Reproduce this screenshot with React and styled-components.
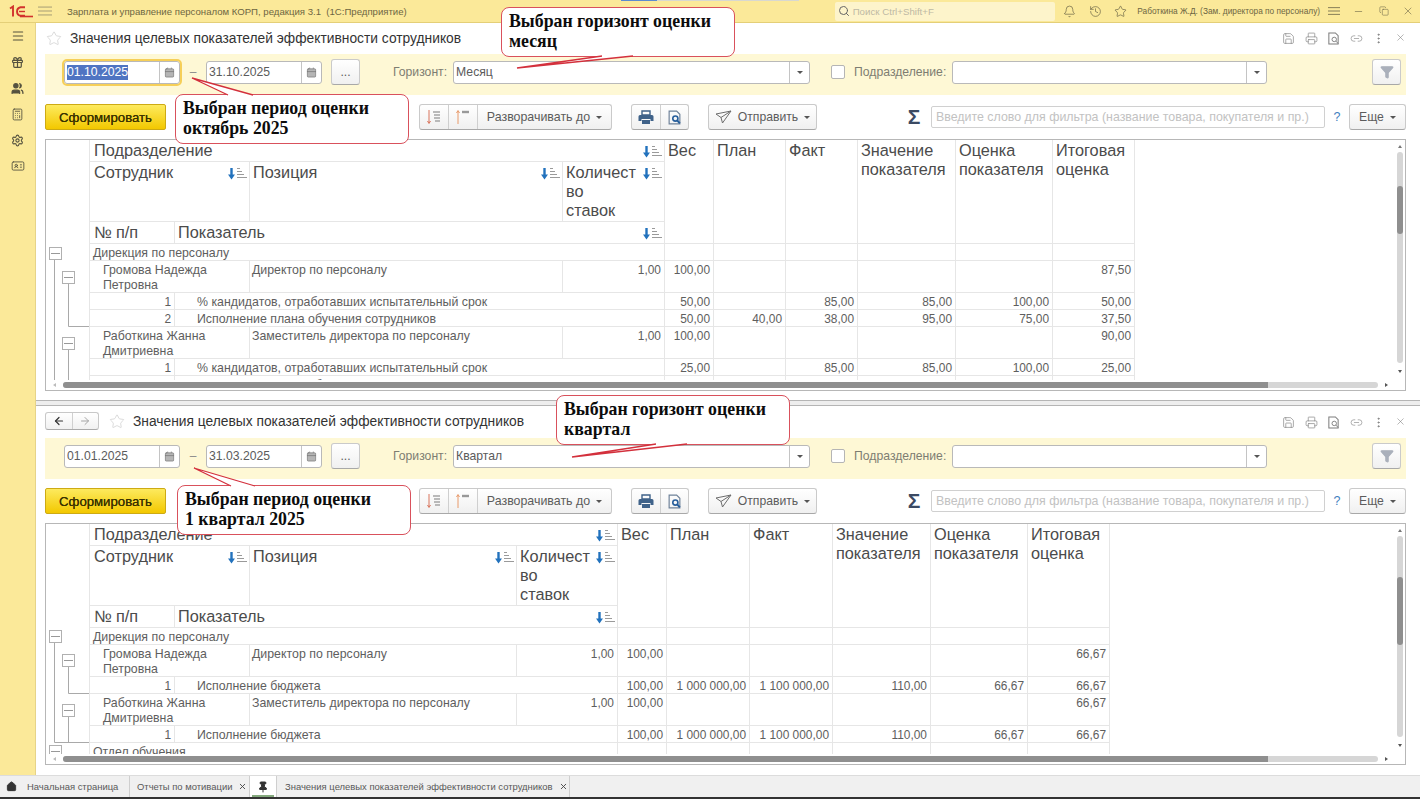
import React from "react";
import styled, { createGlobalStyle, css } from "styled-components";
import {
  Menu, Gift, Users, Calculator, Settings, IdCard, Bell, History, Star, Search, Minus, Copy, X,
  Save, Printer, Link2, MoreVertical, Calendar, Home, Pin, ArrowLeft, ArrowRight, Filter,
} from "lucide-react";

const Global = createGlobalStyle`
  html, body { margin: 0; padding: 0; background: #fff; }
  * { box-sizing: border-box; }
  body { font-family: "Liberation Sans", Arial, sans-serif; color: #555; }
`;

const Page = styled.div`
  position: relative; width: 1420px; height: 799px; overflow: hidden;
  display: flex; flex-direction: column; background: #fff;
`;
const TopBar = styled.header`
  position: relative; height: 23px; flex: none; display: flex; align-items: center;
  background: #fbe999; border-bottom: 1px solid #e4cf78; color: #6d6642; font-size: 9.6px;
`;
const LoadStrip = styled.div`
  position: absolute; top: 0; left: 621px; width: 178px; height: 1px;
  background: linear-gradient(to right, #5b8bd0 20%, #d8d8d0 20%);
`;
const LogoBox = styled.div` width: 36px; padding-left: 9px; display: flex; align-items: center; `;
const HamburgerTop = styled.div` width: 29px; display: flex; color: #9a9270; margin-left: 2px; `;
const AppTitle = styled.div` width: 769px; white-space: pre; `;
const SearchBox = styled.div`
  width: 221px; height: 19px; background: #fdf4cb; border-radius: 2px; display: flex; align-items: center;
  gap: 3px; padding-left: 3px; color: #bdb9a4; font-size: 9.7px;
`;
const TopIcon = styled.div`
  width: ${(p) => p.$w || 25}px; display: flex; justify-content: center; color: #5f5a40; flex: none;
`;
const UserName = styled.div` width: 188px; padding-left: 4px; white-space: nowrap; font-size: 8.3px; `;

const Body = styled.div` flex: 1; display: flex; min-height: 0; `;
const Side = styled.nav`
  width: 36px; flex: none; background: #fbe999; border-right: 1px solid #e6d388;
  display: flex; flex-direction: column; align-items: center; color: #55523f;
`;
const SideItem = styled.div` height: 26px; display: flex; align-items: center; justify-content: center; `;
const Main = styled.main` flex: 1; display: flex; flex-direction: column; min-width: 0; `;
const PanelBox = styled.section`
  flex: none; height: ${(p) => p.$h}px; padding-left: 9px; display: flex; flex-direction: column; width: 1384px;
`;
const Splitter = styled.div`
  height: 6px; flex: none; background: #eeeeee; border-top: 1px solid #b5b5b5; border-bottom: 1px solid #b5b5b5;
`;
const TitleRow = styled.div`
  height: ${(p) => p.$h}px; flex: none; display: flex; align-items: center;
`;
const NavGroup = styled.div`
  width: 54px; height: 18px; display: flex; border: 1px solid #c8c8c8; border-bottom-color: #aaa; border-radius: 3px;
  background: linear-gradient(#fff, #f1f1f1); margin-right: 9px; margin-top: -2px;
`;
const NavBtn = styled.div`
  flex: 1; display: flex; align-items: center; justify-content: center; color: ${(p) => (p.$off ? "#a5a5a5" : "#333")};
  & + & { border-left: 1px solid #d0d0d0; }
`;
const FavStar = styled.div` width: 16px; height: 18px; display: flex; color: #c8c8c8; margin-left: 1px; `;
const Title = styled.h1`
  margin: -1px 0 0 8px; font-weight: 400; font-size: 13.8px; color: #333; flex: 1; white-space: nowrap;
`;
const TitleIcons = styled.div` display: flex; color: #7d7d7d; margin-right: 8px; `;
const TitleIcon = styled.div` width: 22.4px; display: flex; justify-content: center; `;

const FilterBar = styled.div`
  height: 41px; width: 1361px; flex: none; background: #fef8d5; display: flex; align-items: center;
  padding: 0 0 5px 19px;
`;
const Field = styled.div`
  position: relative; height: 23px; width: ${(p) => p.$w}px; margin-left: ${(p) => p.$ml || 0}px; flex: none;
  background: #fff; border: 1px solid #b9b9b9; border-radius: 3px; display: flex; align-items: center;
  font-size: 12.2px; color: #5b5b5b;
  ${(p) => p.$focus && css`outline: 2px solid #f6cf58; outline-offset: 0;`}
`;
const FieldValue = styled.div` flex: 1; padding-left: 2px; white-space: nowrap; `;
const Selected = styled.span` background: #4f74c2; color: #fff; padding: 0 0 1px; `;
const FieldBtn = styled.div`
  width: 20px; height: 100%; flex: none; border-left: 1px solid #c4c4c4; display: flex; align-items: center; justify-content: center;
  color: #6f6f6f;
`;
const Caret = styled.span`
  display: inline-block; width: 0; height: 0; border-left: 3px solid transparent; border-right: 3px solid transparent;
  border-top: 3px solid #555; margin-left: ${(p) => p.$ml || 0}px;
`;
const Dash = styled.div` width: 26px; text-align: center; flex: none; color: #8a8a8a; font-size: 12px; `;
const Label = styled.div` margin-left: ${(p) => p.$ml}px; color: #7d7d72; font-size: 12.2px; white-space: nowrap; flex: none; `;
const Check = styled.div`
  width: 14px; height: 14px; margin-left: ${(p) => p.$ml}px; border: 1px solid #b5b5b5; border-radius: 2px; background: #fff; flex: none;
`;
const Btn = styled.div`
  height: 26px; width: ${(p) => p.$w}px; margin-left: ${(p) => p.$ml || 0}px; flex: none;
  border: 1px solid #cacaca; border-bottom-color: #a8a8a8; border-radius: 3px;
  background: linear-gradient(#ffffff, #f0f0f0); display: flex; align-items: center; justify-content: center; gap: 6px;
  font-size: 12.2px; color: #5c5c5c; white-space: nowrap;
`;
const Toolbar = styled.div` height: 26px; margin-top: 9px; flex: none; display: flex; align-items: center; width: 1361px; `;
const PrimaryBtn = styled.div`
  width: 121px; height: 26px; flex: none; border: 1px solid #cdaa14; border-radius: 2px;
  background: linear-gradient(#fdea5e, #f3c800); display: flex; align-items: center; justify-content: center;
  font-size: 13.2px; color: #3a3200; text-shadow: 0 0 0.4px #3a3200;
`;
const BtnGroup = styled.div`
  height: 26px; display: flex; flex: none; margin-left: ${(p) => p.$ml}px;
  border: 1px solid #cacaca; border-bottom-color: #a8a8a8; border-radius: 3px; background: linear-gradient(#ffffff, #f0f0f0);
`;
const GroupItem = styled.div`
  width: ${(p) => p.$w}px; display: flex; align-items: center; justify-content: center; gap: 6px;
  font-size: 12.4px; color: #5c5c5c; white-space: nowrap;
  & + & { border-left: 1px solid #cfcfcf; }
`;
const SigmaMark = styled.div`
  width: 16px; margin-left: 89px; flex: none; text-align: center; font-size: 21px; font-weight: 700; color: #3b4a63; line-height: 26px;
`;
const SearchInput = styled.div`
  width: 394px; height: 22px; margin-left: 9px; flex: none; border: 1px solid #d0d0d0; border-radius: 2px;
  padding-left: 4px; display: flex; align-items: center; font-size: 12.4px; color: #c2c2c2; white-space: nowrap; overflow: hidden;
`;
const Help = styled.div` width: 24px; flex: none; text-align: center; color: #3f7fc0; font-size: 12.5px; `;

const Frame = styled.div`
  margin-top: 9px; width: 1361px; height: ${(p) => p.$h}px; flex: none; border: 1px solid #b7b7b7;
  display: grid; grid-template-columns: 1fr 11px; grid-template-rows: 1fr 10px; overflow: hidden;
`;
const Scrollable = styled.div` display: flex; overflow: hidden; min-height: 0; `;
const Gutter = styled.svg` width: 43px; flex: none; display: block; `;
const TableGrid = styled.div`
  display: grid; align-self: flex-start; flex: none; border-left: 1px solid #e6e6e6;
  grid-template-columns: ${(p) => p.$cols}; grid-template-rows: ${(p) => p.$rows};
`;
const HeadCell = styled.div`
  grid-column: ${(p) => p.$col}; grid-row: ${(p) => p.$row};
  border-right: 1px solid #e6e6e6; border-bottom: 1px solid #e6e6e6;
  display: flex; justify-content: space-between; align-items: flex-start; padding: 1px 1px 0 ${(p) => p.$pl || 3}px;
  font-size: 16.3px; line-height: 19px; color: #4b4b4b; white-space: nowrap; min-width: 0;
`;
const HeadText = styled.span` flex: none; `;
const Cell = styled.div`
  grid-column: span ${(p) => p.$span || 1};
  border-right: 1px solid #e6e6e6; border-bottom: 1px solid #e6e6e6;
  padding: 1.5px ${(p) => (p.$right ? 3 : 0)}px 0 ${(p) => p.$pl || 0}px; text-align: ${(p) => (p.$right ? "right" : "left")};
  font-size: ${(p) => (p.$right ? 11.9 : 12.35)}px; line-height: 15px; color: #5e5e5e; white-space: pre-line; overflow: hidden;
`;
const VScroll = styled.div` display: flex; flex-direction: column; align-items: center; min-height: 0; `;
const VTrack = styled.div`
  flex: 1; width: 6px; background: #d6d6d6; border-radius: 3px; position: relative; margin-left: 1px;
`;
const VThumb = styled.div`
  margin-top: ${(p) => p.$top}px; height: ${(p) => p.$h}px; background: #8f8f8f; border-radius: 3px;
`;
const ArrowBox = styled.div`
  height: ${(p) => p.$h}px; width: ${(p) => p.$w || "100%"}; flex: none; display: flex; align-items: center; justify-content: center;
`;
const Tri = styled.span`
  width: 0; height: 0; display: block;
  ${(p) => p.$dir === "up" && "border-left:2px solid transparent;border-right:2px solid transparent;border-bottom:3px solid #777;"}
  ${(p) => p.$dir === "down" && "border-left:2px solid transparent;border-right:2px solid transparent;border-top:3px solid #555;"}
  ${(p) => p.$dir === "left" && "border-top:2px solid transparent;border-bottom:2px solid transparent;border-right:3px solid #bbb;"}
  ${(p) => p.$dir === "right" && "border-top:2px solid transparent;border-bottom:2px solid transparent;border-left:3px solid #555;"}
`;
const HScroll = styled.div` display: flex; align-items: center; grid-column: 1; `;
const HTrack = styled.div` flex: 1; height: 6px; background: #d6d6d6; border-radius: 3px; display: flex; `;
const HThumb = styled.div` width: 1205px; background: #8f8f8f; border-radius: 3px 0 0 3px; `;

const TabBar = styled.footer`
  height: 24px; flex: none; background: #f0f0f0; border-top: 1px solid #dcdcdc; border-bottom: 2px solid #333;
  display: flex; font-size: 9.45px; color: #595959;
`;
const Tab = styled.div`
  width: ${(p) => p.$w}px; flex: none; display: flex; align-items: center; padding-left: ${(p) => p.$pl}px; gap: ${(p) => p.$gap || 6}px;
  border-right: 1px solid #cfcfcf; white-space: nowrap; position: relative;
  background: ${(p) => (p.$white ? "#fff" : "transparent")}; color: #595959;
`;
const PinMark = styled.span`
  position: absolute; left: 2px; right: 2px; bottom: 0; height: 2px; background: #84a97d;
`;
const TabClose = styled.span` display: flex; color: #444; `;

const Callout = styled.div`
  position: absolute; left: ${(p) => p.$x}px; top: ${(p) => p.$y}px; width: ${(p) => p.$w}px; height: ${(p) => p.$h}px;
  background: #fff; border: 1.5px solid #d9515c; border-radius: 8px; padding: 3px 7px;
  font-family: "Liberation Serif", "Times New Roman", serif; font-weight: 700; font-size: 17.8px; line-height: 20px; color: #0c0c0c;
  white-space: pre-line; z-index: 5;
`;
const TailLayer = styled.svg`
  position: absolute; left: 0; top: 0; width: 1420px; height: 799px; pointer-events: none; z-index: 6;
`;

const Logo = () => (
  <svg width="24" height="13" viewBox="0 0 24 13" fill="none" stroke="#d2322d" strokeWidth="1.9">
    <path d="M1 3.5 L4 1.5 V11.5" />
    <path d="M16 2.2 H11.5 A4.4 4.4 0 0 0 11.5 10.8 H16" />
    <path d="M10 6.5 H16" strokeWidth="1.4" />
    <path d="M11 11.5 H24" strokeWidth="1.6" />
  </svg>
);
const Burger = ({ w = 16, c = "currentColor" }) => (
  <svg width={w} height="12" viewBox="0 0 16 12" stroke={c} strokeWidth="1"><path d="M0 1.5H16M0 6H16M0 10.5H16" /></svg>
);
const SortIcon = () => (
  <svg width="20" height="13" viewBox="0 0 20 13" style={{ flex: "none", marginTop: 4 }}>
    <path d="M3.5 1V10" stroke="#2272bd" strokeWidth="2.4" />
    <path d="M0 7.5 H7 L3.5 12.5Z" fill="#2272bd" />
    <path d="M9 1.5H12M9 4.5H14M9 7.5H16M9 10.5H19" stroke="#9a9a9a" strokeWidth="1.1" />
  </svg>
);
const PreviewIcon = ({ c = "#7d7d7d", s = 14, blue }) => (
  <svg width={s} height={s} viewBox="0 0 14 14" fill="none" stroke={c} strokeWidth="1.1">
    <path d="M9 1H2V13H12V4Z" />
    <circle cx="7.8" cy="8" r="2.4" stroke={blue ? "#285f9c" : c} strokeWidth={blue ? 1.5 : 1} />
    <path d="M9.6 9.8L12 12.4" stroke={blue ? "#285f9c" : c} strokeWidth={blue ? 1.8 : 1} />
  </svg>
);
const ExpandIcon = ({ up }) => (
  <svg width="16" height="16" viewBox="0 0 16 16" fill="none">
    <path d={up ? "M3 15V2M1.5 4L3 1.5L4.500 4" : "M3 1V14M1.500 12L3 14.500L4.500 12"} stroke={up ? "#e89a6a" : "#d9745c"} strokeWidth="1" />
    {up ? <path d="M7 3H14" stroke="#999" strokeWidth="2.4" /> : <path d="M7 3H14M8 6H14M8 9H14M9 12H14" stroke="#a5a5a5" strokeWidth="1.6" />}
  </svg>
);
const SendIcon = () => (
  <svg width="17" height="14" viewBox="0 0 17 14" fill="none" stroke="#6d6d6d" strokeWidth="1">
    <path d="M16 1L1 4L6 7.500L7.500 13Z M16 1L6 7.500" />
  </svg>
);
const PrinterBlue = () => (
  <svg width="16" height="15" viewBox="0 0 16 15">
    <path d="M4 1H12V5H4Z" fill="none" stroke="#3f6289" strokeWidth="1.4" />
    <path d="M2 5H14A1.500 1.500 0 0 1 15.500 6.500V11H12.500V9H3.500V11H.5V6.500A1.500 1.500 0 0 1 2 5Z" fill="#3f6289" />
    <path d="M4 10H12V14H4Z" fill="#3f6289" />
  </svg>
);

const Tree = ({ h, boxes, lines }) => (
  <Gutter height={h} viewBox={`0 0 43 ${h}`}>
    {lines.map((d, i) => (
      <path key={i} d={d} fill="none" stroke="#a9a9a9" strokeWidth="1" />
    ))}
    {boxes.map(([x, y], i) => (
      <g key={i}>
        <rect x={x + 0.5} y={y + 0.5} width="12" height="12" fill="#fff" stroke="#b0b0b0" />
        <path d={`M${x + 2} ${y + 6.500}H${x + 11}`} stroke="#999" />
      </g>
    ))}
  </Gutter>
);

const heights = { section: 17, emp: 32, ind: 17 };

const Row = ({ r }) => {
  const vals = r.v.map((v, i) => <Cell key={i} $right>{v}</Cell>);
  if (r.t === "section")
    return (<><Cell $span={4} $pl={3}>{r.name}</Cell>{vals}</>);
  if (r.t === "emp")
    return (<><Cell $span={2} $pl={13}>{r.name}</Cell><Cell $pl={2}>{r.pos}</Cell><Cell $right>{r.q}</Cell>{vals}</>);
  return (<><Cell $right>{r.n}</Cell><Cell $span={3} $pl={22}>{r.name}</Cell>{vals}</>);
};

const Panel = ({ h, titleH, nav, from, to, focus, horizon, frameH, cols, rows, tree, thumb }) => (
  <PanelBox $h={h}>
    <TitleRow $h={titleH}>
      {nav && (
        <NavGroup>
          <NavBtn><ArrowLeft size={12} strokeWidth={2.4} /></NavBtn>
          <NavBtn $off><ArrowRight size={12} strokeWidth={2} /></NavBtn>
        </NavGroup>
      )}
      <FavStar><Star size={17} strokeWidth={1} /></FavStar>
      <Title>Значения целевых показателей эффективности сотрудников</Title>
      <TitleIcons>
        <TitleIcon><Save size={13} strokeWidth={1.2} /></TitleIcon>
        <TitleIcon><Printer size={13} strokeWidth={1.2} /></TitleIcon>
        <TitleIcon><PreviewIcon s={13} /></TitleIcon>
        <TitleIcon><Link2 size={13} strokeWidth={1.1} /></TitleIcon>
        <TitleIcon><MoreVertical size={13} strokeWidth={1.8} /></TitleIcon>
        <TitleIcon><X size={11} strokeWidth={1.2} /></TitleIcon>
      </TitleIcons>
    </TitleRow>
    <FilterBar>
      <Field $w={116} $focus={focus}>
        <FieldValue>{focus ? <Selected>{from}</Selected> : from}</FieldValue>
        <FieldBtn><Calendar size={11} fill="#b5b5b5" strokeWidth={1.4} /></FieldBtn>
      </Field>
      <Dash>–</Dash>
      <Field $w={116}>
        <FieldValue>{to}</FieldValue>
        <FieldBtn><Calendar size={11} fill="#b5b5b5" strokeWidth={1.4} /></FieldBtn>
      </Field>
      <Btn $w={29} $ml={9}>...</Btn>
      <Label $ml={33}>Горизонт:</Label>
      <Field $w={357} $ml={6}>
        <FieldValue>{horizon}</FieldValue>
        <FieldBtn><Caret /></FieldBtn>
      </Field>
      <Check $ml={21} />
      <Label $ml={9}>Подразделение:</Label>
      <Field $w={315} $ml={6}>
        <FieldValue />
        <FieldBtn><Caret /></FieldBtn>
      </Field>
      <Btn $w={29} $ml={105}><Filter size={14} fill="#aab0bb" color="#aab0bb" /></Btn>
    </FilterBar>
    <Toolbar>
      <PrimaryBtn>Сформировать</PrimaryBtn>
      <BtnGroup $ml={253}>
        <GroupItem $w={28}><ExpandIcon /></GroupItem>
        <GroupItem $w={29}><ExpandIcon up /></GroupItem>
        <GroupItem $w={134}>Разворачивать до <Caret /></GroupItem>
      </BtnGroup>
      <BtnGroup $ml={19}>
        <GroupItem $w={28}><PrinterBlue /></GroupItem>
        <GroupItem $w={28}><PreviewIcon s={15} c="#6f8299" blue /></GroupItem>
      </BtnGroup>
      <Btn $w={109} $ml={19}><SendIcon />Отправить <Caret /></Btn>
      <SigmaMark>Σ</SigmaMark>
      <SearchInput>Введите слово для фильтра (название товара, покупателя и пр.)</SearchInput>
      <Help>?</Help>
      <Btn $w={57}>Еще <Caret /></Btn>
    </Toolbar>
    <Frame $h={frameH}>
      <Scrollable>
        <Tree {...tree} />
        <TableGrid
          $cols={cols.map((c) => c + "px").join(" ")}
          $rows={["22px", "60px", "22px", ...rows.map((r) => heights[r.t] + "px")].join(" ")}
        >
          <HeadCell $col="1 / span 4" $row="1" $pl={4}><HeadText>Подразделение</HeadText><SortIcon /></HeadCell>
          <HeadCell $col="1 / span 2" $row="2" $pl={4}><HeadText>Сотрудник</HeadText><SortIcon /></HeadCell>
          <HeadCell $col="3" $row="2"><HeadText>Позиция</HeadText><SortIcon /></HeadCell>
          <HeadCell $col="4" $row="2"><HeadText>Количест<br />во<br />ставок</HeadText><SortIcon /></HeadCell>
          <HeadCell $col="1" $row="3" $pl={4}><HeadText>№ п/п</HeadText></HeadCell>
          <HeadCell $col="2 / span 3" $row="3"><HeadText>Показатель</HeadText><SortIcon /></HeadCell>
          {[["Вес"], ["План"], ["Факт"], ["Значение", "показателя"], ["Оценка", "показателя"], ["Итоговая", "оценка"]].map((t, i) => (
            <HeadCell key={i} $col={String(5 + i)} $row="1 / span 3">
              <HeadText>{t[0]}{t[1] && <br />}{t[1]}</HeadText>
            </HeadCell>
          ))}
          {rows.map((r, i) => <Row key={i} r={r} />)}
        </TableGrid>
      </Scrollable>
      <VScroll>
        <ArrowBox $h={12}><Tri $dir="up" /></ArrowBox>
        <VTrack><VThumb $top={thumb[0]} $h={thumb[1]} /></VTrack>
        <ArrowBox $h={17}><Tri $dir="down" /></ArrowBox>
      </VScroll>
      <HScroll>
        <ArrowBox $h={10} $w="17px"><Tri $dir="left" /></ArrowBox>
        <HTrack><HThumb /></HTrack>
        <ArrowBox $h={10} $w="16px"><Tri $dir="right" /></ArrowBox>
      </HScroll>
    </Frame>
  </PanelBox>
);

const E = ["", "", "", "", "", ""];
const rows1 = [
  { t: "section", name: "Дирекция по персоналу", v: E },
  { t: "emp", name: "Громова Надежда\nПетровна", pos: "Директор по персоналу", q: "1,00", v: ["100,00", "", "", "", "", "87,50"] },
  { t: "ind", n: "1", name: "% кандидатов, отработавших испытательный срок", v: ["50,00", "", "85,00", "85,00", "100,00", "50,00"] },
  { t: "ind", n: "2", name: "Исполнение плана обучения сотрудников", v: ["50,00", "40,00", "38,00", "95,00", "75,00", "37,50"] },
  { t: "emp", name: "Работкина Жанна\nДмитриевна", pos: "Заместитель директора по персоналу", q: "1,00", v: ["100,00", "", "", "", "", "90,00"] },
  { t: "ind", n: "1", name: "% кандидатов, отработавших испытательный срок", v: ["25,00", "", "85,00", "85,00", "100,00", "25,00"] },
  { t: "ind", n: "2", name: "Исполнение плана обучения сотрудников", v: ["50,00", "40,00", "37,00", "107,50", "80,00", "40,00"] },
];
const B = { t: "ind", n: "1", name: "Исполнение бюджета", v: ["100,00", "1 000 000,00", "1 100 000,00", "110,00", "66,67", "66,67"] };
const rows2 = [
  { t: "section", name: "Дирекция по персоналу", v: E },
  { t: "emp", name: "Громова Надежда\nПетровна", pos: "Директор по персоналу", q: "1,00", v: ["100,00", "", "", "", "", "66,67"] },
  B,
  { t: "emp", name: "Работкина Жанна\nДмитриевна", pos: "Заместитель директора по персоналу", q: "1,00", v: ["100,00", "", "", "", "", "66,67"] },
  B,
  { t: "section", name: "Отдел обучения", v: E },
];

const callouts = [
  { x: 175, y: 94, w: 234, h: 50, text: "Выбран период оценки\nоктябрь 2025", tail: [[192, 78], [228, 95], [253, 95]] },
  { x: 501, y: 7, w: 234, h: 50, text: "Выбран горизонт оценки\nмесяц", tail: [[517, 68], [602, 56], [633, 56]] },
  { x: 177, y: 485, w: 234, h: 50, text: "Выбран период оценки\n1 квартал 2025", tail: [[194, 468], [231, 486], [255, 486]] },
  { x: 556, y: 395, w: 234, h: 50, text: "Выбран горизонт оценки\nквартал", tail: [[572, 457], [656, 444], [687, 444]] },
];

export default function App() {
  return (
    <Page>
      <Global />
      <TopBar>
        <LoadStrip />
        <LogoBox><Logo /></LogoBox>
        <HamburgerTop><Burger w={14} /></HamburgerTop>
        <AppTitle>{"Зарплата и управление персоналом КОРП, редакция 3.1  (1С:Предприятие)"}</AppTitle>
        <SearchBox><Search size={12} color="#666" />Поиск Ctrl+Shift+F</SearchBox>
        <TopIcon $w={28}><Bell size={13} strokeWidth={1.2} /></TopIcon>
        <TopIcon><History size={13} strokeWidth={1.2} /></TopIcon>
        <TopIcon><Star size={13} strokeWidth={1.2} /></TopIcon>
        <UserName>Работкина Ж.Д. (Зам. директора по персоналу)</UserName>
        <TopIcon><Burger w={12} /></TopIcon>
        <TopIcon><Minus size={11} strokeWidth={1.2} /></TopIcon>
        <TopIcon><Copy size={10} strokeWidth={1.2} /></TopIcon>
        <TopIcon $w={24}><X size={12} strokeWidth={1.1} /></TopIcon>
      </TopBar>
      <Body>
        <Side>
          <SideItem><Menu size={14} strokeWidth={1.8} /></SideItem>
          <SideItem><Gift size={13} strokeWidth={2.2} /></SideItem>
          <SideItem><Users size={13} strokeWidth={2.2} fill="#55523f" /></SideItem>
          <SideItem><Calculator size={13} strokeWidth={1.6} /></SideItem>
          <SideItem><Settings size={13} strokeWidth={2} /></SideItem>
          <SideItem><IdCard size={14} strokeWidth={1.5} /></SideItem>
        </Side>
        <Main>
          <Panel
            h={377} titleH={31} from="01.10.2025" to="31.10.2025" focus horizon="Месяц" frameH={252}
            cols={[85, 75, 313, 102, 49, 72, 72, 98, 97, 82]} rows={rows1} thumb={[34, 48]}
            tree={{
              h: 240,
              boxes: [[3, 107], [16, 131], [16, 197]],
              lines: ["M8.500 119V240", "M22.500 144V186.500H43", "M22.500 210V240"],
            }}
          />
          <Splitter />
          <Panel
            h={359} titleH={32} nav from="01.01.2025" to="31.03.2025" horizon="Квартал" frameH={242}
            cols={[85, 75, 267, 101, 49, 83, 83, 98, 97, 82]} rows={rows2} thumb={[41, 68]}
            tree={{
              h: 230,
              boxes: [[3, 106], [16, 130], [16, 180], [3, 221]],
              lines: ["M8.500 119V218.500H43", "M22.500 143V169.500H43", "M22.500 193V218.500"],
            }}
          />
        </Main>
      </Body>
      <TabBar>
        <Tab $w={130} $pl={6} $gap={10}><Home size={11} fill="#333" color="#333" />Начальная страница</Tab>
        <Tab $w={120} $pl={7}>Отчеты по мотивации <TabClose><X size={9} strokeWidth={2.4} /></TabClose></Tab>
        <Tab $w={27} $pl={7} $white><Pin size={12} fill="#333" color="#333" /><PinMark /></Tab>
        <Tab $w={293} $pl={8}>Значения целевых показателей эффективности сотрудников <TabClose><X size={9} strokeWidth={2.4} /></TabClose></Tab>
      </TabBar>
      {callouts.map((c, i) => (
        <Callout key={i} $x={c.x} $y={c.y} $w={c.w} $h={c.h}>{c.text}</Callout>
      ))}
      <TailLayer viewBox="0 0 1420 799">
        {callouts.map((c, i) => {
          const [a, b, d] = c.tail;
          return (
            <g key={i}>
              <polygon points={`${a[0]},${a[1]} ${b[0]},${b[1]} ${d[0]},${d[1]}`} fill="#fff" />
              <polyline points={`${b[0]},${b[1]} ${a[0]},${a[1]} ${d[0]},${d[1]}`} fill="none" stroke="#d3303c" strokeWidth="1.3" />
            </g>
          );
        })}
      </TailLayer>
    </Page>
  );
}
